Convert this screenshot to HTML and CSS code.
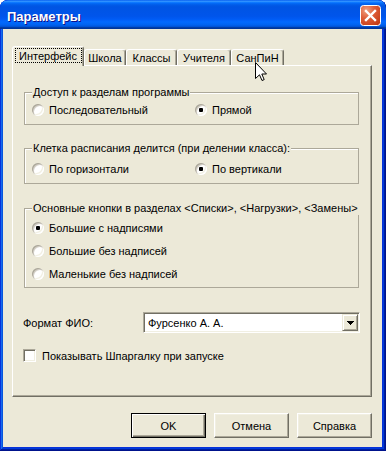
FILE: index.html
```html
<!DOCTYPE html>
<html lang="ru">
<head>
<meta charset="utf-8">
<title>Параметры</title>
<link rel="stylesheet" href="styles.css">
</head>
<body>
<div class="window">
  <div class="titlebar">
    <span class="title">Параметры</span>
    <button class="close" aria-label="Закрыть">
      <svg width="21" height="21" viewBox="0 0 21 21">
        <defs>
          <radialGradient id="cg" cx="0.3" cy="0.25" r="0.9">
            <stop offset="0" stop-color="#F0A080"/>
            <stop offset="0.45" stop-color="#DE5D38"/>
            <stop offset="1" stop-color="#C33A14"/>
          </radialGradient>
        </defs>
        <rect x="0.5" y="0.5" width="20" height="20" rx="3" fill="url(#cg)" stroke="#fff"/>
        <path d="M6 6 L15 15 M15 6 L6 15" stroke="#fff" stroke-width="2.4" stroke-linecap="square"/>
      </svg>
    </button>
  </div>
  <div class="client">
    <div class="tabs">
      <div class="tab tab-active w1"><span class="focus">Интерфейс</span></div>
      <div class="tab w2">Школа</div>
      <div class="tab w3">Классы</div>
      <div class="tab w4">Учителя</div>
      <div class="tab w5">СанПиН</div>
    </div>
    <div class="panel">
      <fieldset class="group g1">
        <legend>Доступ к разделам программы</legend>
        <div class="row">
          <label class="opt col1"><span class="radio"></span>Последовательный</label>
          <label class="opt"><span class="radio checked"></span>Прямой</label>
        </div>
      </fieldset>
      <fieldset class="group g2">
        <legend>Клетка расписания делится (при делении класса):</legend>
        <div class="row">
          <label class="opt col1"><span class="radio"></span>По горизонтали</label>
          <label class="opt"><span class="radio checked"></span>По вертикали</label>
        </div>
      </fieldset>
      <fieldset class="group g3">
        <legend>Основные кнопки в разделах &lt;Списки&gt;, &lt;Нагрузки&gt;, &lt;Замены&gt;</legend>
        <div class="row"><label class="opt"><span class="radio checked"></span>Большие с надписями</label></div>
        <div class="row"><label class="opt"><span class="radio"></span>Большие без надписей</label></div>
        <div class="row"><label class="opt"><span class="radio"></span>Маленькие без надписей</label></div>
      </fieldset>
      <div class="fio-row">
        <span class="fio-label">Формат ФИО:</span>
        <div class="combo">
          <span class="combo-text">Фурсенко А. А.</span>
          <span class="dd"><svg width="7" height="4" viewBox="0 0 7 4"><path d="M0 0h7v1h-1v1h-1v1h-1v1h-1v-1h-1v-1h-1v-1h-1z" fill="#000"/></svg></span>
        </div>
      </div>
      <label class="check-row"><span class="checkbox"></span>Показывать Шпаргалку при запуске</label>
    </div>
    <div class="buttons">
      <button class="btn btn-default">OK</button>
      <button class="btn">Отмена</button>
      <button class="btn">Справка</button>
    </div>
  </div>
  <svg class="cursor" width="12" height="20" viewBox="0 0 12 20">
    <path d="M0.5 0.5 L0.5 16.5 L4.5 12.8 L7 18.5 L9.2 17.6 L6.8 12 L11.5 12 Z" fill="#fff" stroke="#000" stroke-width="1" stroke-linejoin="miter"/>
  </svg>
</div>
</body>
</html>
```

FILE: styles.css
```css
* { box-sizing: border-box; }
html, body { margin: 0; padding: 0; }
body {
  background: #fff;
  font: 11px "Liberation Sans", Arial, sans-serif;
  color: #000;
}
.window {
  position: relative;
  width: 386px;
  height: 451px;
  display: flex;
  flex-direction: column;
  background: #0831d9;
  border-radius: 8px 8px 0 0;
  overflow: hidden;
  box-shadow: inset -1px -1px #00138c, inset 1px 1px #0831d9,
              inset -2px -2px #001ea0, inset 2px 2px #166aee,
              inset -3px -3px #003bda, inset 3px 3px #0855dd;
}
.titlebar {
  flex: none;
  height: 29px;
  display: flex;
  justify-content: space-between;
  align-items: center;
  padding: 0 5px 0 7px;
  border-radius: 8px 8px 0 0;
  background: linear-gradient(180deg, #0058ee 0%, #3593ff 4%, #288eff 6%, #127dff 8%, #036ffc 10%, #0262ee 14%, #0057e5 20%, #0054e3 24%, #0055eb 56%, #005bf5 66%, #026afe 76%, #0062ef 86%, #0052d6 92%, #0040ab 94%, #003092 100%);
}
.title {
  color: #fff;
  font: bold 13px "Liberation Sans", Arial, sans-serif;
  text-shadow: 1px 1px #0f1089;
  margin-top: 3px;
}
.close {
  align-self: flex-start;
  margin-top: 5px;
  width: 21px;
  height: 21px;
  padding: 0;
  border: 0;
  background: none;
  display: block;
}
.close svg { display: block; }
.client {
  flex: 1;
  margin: 0 4px 4px 3px;
  background: #ece9d8;
  padding: 17px 10px 0 9px;
}
.tabs {
  display: flex;
  align-items: flex-end;
  height: 19px;
}
.tab {
  height: 16px;
  display: flex;
  align-items: center;
  justify-content: center;
  background: #ece9d8;
  border-left: 1px solid #fff;
  border-top: 1px solid #fff;
  border-right: 1px solid #716f64;
  box-shadow: inset -1px 0 #aca899;
  border-radius: 3px 3px 0 0;
  white-space: nowrap;
}
.tab-active {
  position: relative;
  z-index: 1;
  height: 20px;
  margin-bottom: -1px;
  padding-bottom: 2px;
}
.focus {
  width: 67px;
  height: 15px;
  border: 1px dotted #000;
  display: flex;
  align-items: center;
  justify-content: center;
}
.w1 { width: 72px; }
.w2 { width: 42px; }
.w3 { width: 51px; }
.w4 { width: 54px; }
.w5 { width: 53px; }
.panel {
  height: 332px;
  border: 1px solid;
  border-color: #fff #716f64 #716f64 #fff;
  box-shadow: inset -1px -1px #aca899;
}
.group {
  margin: 0 12px 0 11px;
  border: 1px solid #aca899;
  box-shadow: inset 1px 1px #fff;
  padding: 0 7px;
  min-width: 0;
}
.group legend {
  padding: 0 1px;
  line-height: 13px;
  white-space: nowrap;
  background: #ece9d8;
}
.g1 { margin-top: 20px; padding-top: 3px; padding-bottom: 6px; }
.g2 { margin-top: 17px; padding-top: 6px; padding-bottom: 6px; }
.g3 { margin-top: 18px; padding-top: 1px; padding-bottom: 2px; }
.row {
  display: flex;
  align-items: center;
  height: 16px;
}
.g3 .row { height: 23px; }
.opt {
  display: flex;
  align-items: center;
  gap: 5px;
  white-space: nowrap;
}
.col1 { width: 163px; }
.radio {
  flex: none;
  width: 12px;
  height: 12px;
  border-radius: 50%;
  background: #fff;
  display: flex;
  align-items: center;
  justify-content: center;
  box-shadow: inset 1px 1px #aca899, inset -1px -1px #fff,
              inset 2px 2px #d4d0c8, inset -2px -2px #f1efe2;
}
.radio.checked::after {
  content: "";
  width: 4px;
  height: 4px;
  border-radius: 1px;
  background: #000;
}
.fio-row {
  display: flex;
  align-items: center;
  height: 21px;
  margin: 24px 0 0 10px;
}
.fio-label { width: 120px; }
.combo {
  width: 217px;
  height: 21px;
  display: flex;
  align-items: center;
  background: #fff;
  border: 1px solid;
  border-color: #aca899 #fff #fff #aca899;
  box-shadow: inset 1px 1px #716f64, inset -1px -1px #f1efe2;
}
.combo-text {
  flex: 1;
  padding-left: 4px;
  white-space: nowrap;
}
.dd {
  flex: none;
  width: 16px;
  height: 17px;
  margin: 1px 1px 1px 0;
  display: flex;
  align-items: center;
  justify-content: center;
  background: #ece9d8;
  border: 1px solid;
  border-color: #ece9d8 #716f64 #716f64 #ece9d8;
  box-shadow: inset 1px 1px #fff, inset -1px -1px #aca899;
}
.dd svg { display: block; }
.check-row {
  display: flex;
  align-items: center;
  gap: 6px;
  height: 13px;
  margin: 16px 0 0 10px;
  white-space: nowrap;
}
.checkbox {
  flex: none;
  width: 13px;
  height: 13px;
  background: #fff;
  border: 1px solid;
  border-color: #aca899 #fff #fff #aca899;
  box-shadow: inset 1px 1px #716f64, inset -1px -1px #f1efe2;
}
.buttons {
  display: flex;
  justify-content: flex-end;
  gap: 8px;
  margin-top: 16px;
}
.btn {
  width: 75px;
  height: 25px;
  padding: 0;
  font: 11px "Liberation Sans", Arial, sans-serif;
  color: #000;
  background: #ece9d8;
  border: 1px solid;
  border-color: #fff #716f64 #716f64 #fff;
  box-shadow: inset -1px -1px #aca899, inset 1px 1px #f1efe2;
}
.btn-default {
  border: 1px solid #000;
  box-shadow: inset 1px 1px #fff, inset -1px -1px #716f64, inset -2px -2px #aca899;
}
.cursor {
  position: absolute;
  left: 255px;
  top: 62px;
  z-index: 5;
}
```
